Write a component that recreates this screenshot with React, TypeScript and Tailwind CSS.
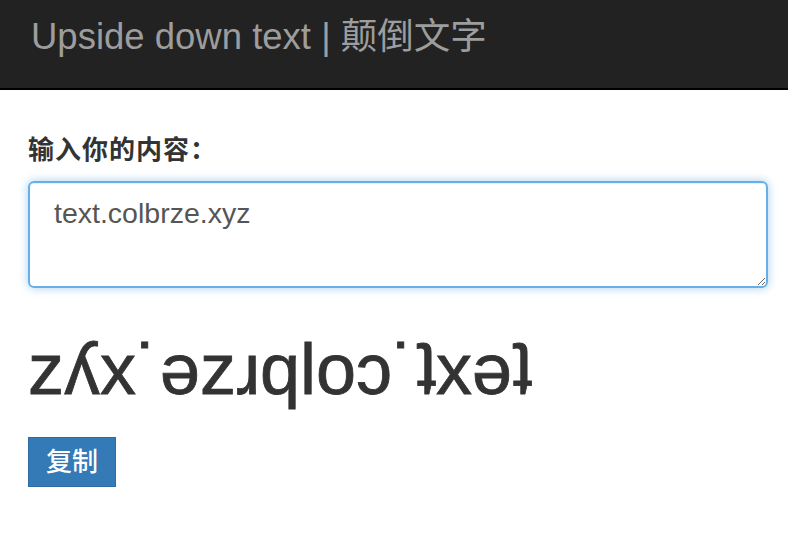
import { useState } from "react";

const flipMap: Record<string, string> = {
  a: "ɐ", b: "q", c: "ɔ", d: "p", e: "ǝ", f: "ɟ", g: "ƃ", h: "ɥ", i: "ᴉ", j: "ɾ",
  k: "ʞ", l: "l", m: "ɯ", n: "u", o: "o", p: "d", q: "b", r: "ɹ", s: "s", t: "ʇ",
  u: "n", v: "ʌ", w: "ʍ", x: "x", y: "ʎ", z: "z", ".": "˙", ",": "'", "?": "¿", "!": "¡",
};

function flip(text: string) {
  return text
    .split("")
    .reverse()
    .map((ch) => flipMap[ch] ?? ch)
    .join("");
}

export default function App() {
  const [value, setValue] = useState("text.colbrze.xyz");
  const font = { fontFamily: '"Liberation Sans", "Noto Sans CJK SC", sans-serif' };

  return (
    <div className="min-h-[536px] bg-white" style={font}>
      <nav className="flex h-[90px] items-start border-b-2 border-black bg-[#222222] px-[31px]">
        <span className="mt-[15px] text-[36.5px] leading-[44px] text-[#9d9d9d]">
          Upside down text | 颠倒文字
        </span>
      </nav>

      <main className="flex flex-col items-start px-[28px] pt-[45px]">
        <label
          htmlFor="content"
          className="text-[26px] font-bold leading-[30px] tracking-[1px] text-[#333333]"
        >
          输入你的内容：
        </label>
        <textarea
          id="content"
          value={value}
          onChange={(e) => setValue(e.target.value)}
          className="mt-[16px] h-[107px] w-[740px] rounded-[6px] border-2 border-[#66afe9] px-[24px] pt-[14px] text-[28.5px] leading-[32px] text-[#555555] shadow-[inset_0_1px_1px_rgba(0,0,0,0.075),0_0_10px_rgba(102,175,233,0.6)] outline-none"
          style={font}
        />
        <h1 className="mt-[39px] text-[72px] leading-[84px] font-normal text-[#333333] [-webkit-text-stroke:0.8px_#333333]">
          {flip(value)}
        </h1>
        <button className="mt-[26px] flex h-[50px] w-[88px] items-center justify-center border border-[#2e6da4] bg-[#337ab7] text-[26px] font-medium text-white">
          复制
        </button>
      </main>
    </div>
  );
}
